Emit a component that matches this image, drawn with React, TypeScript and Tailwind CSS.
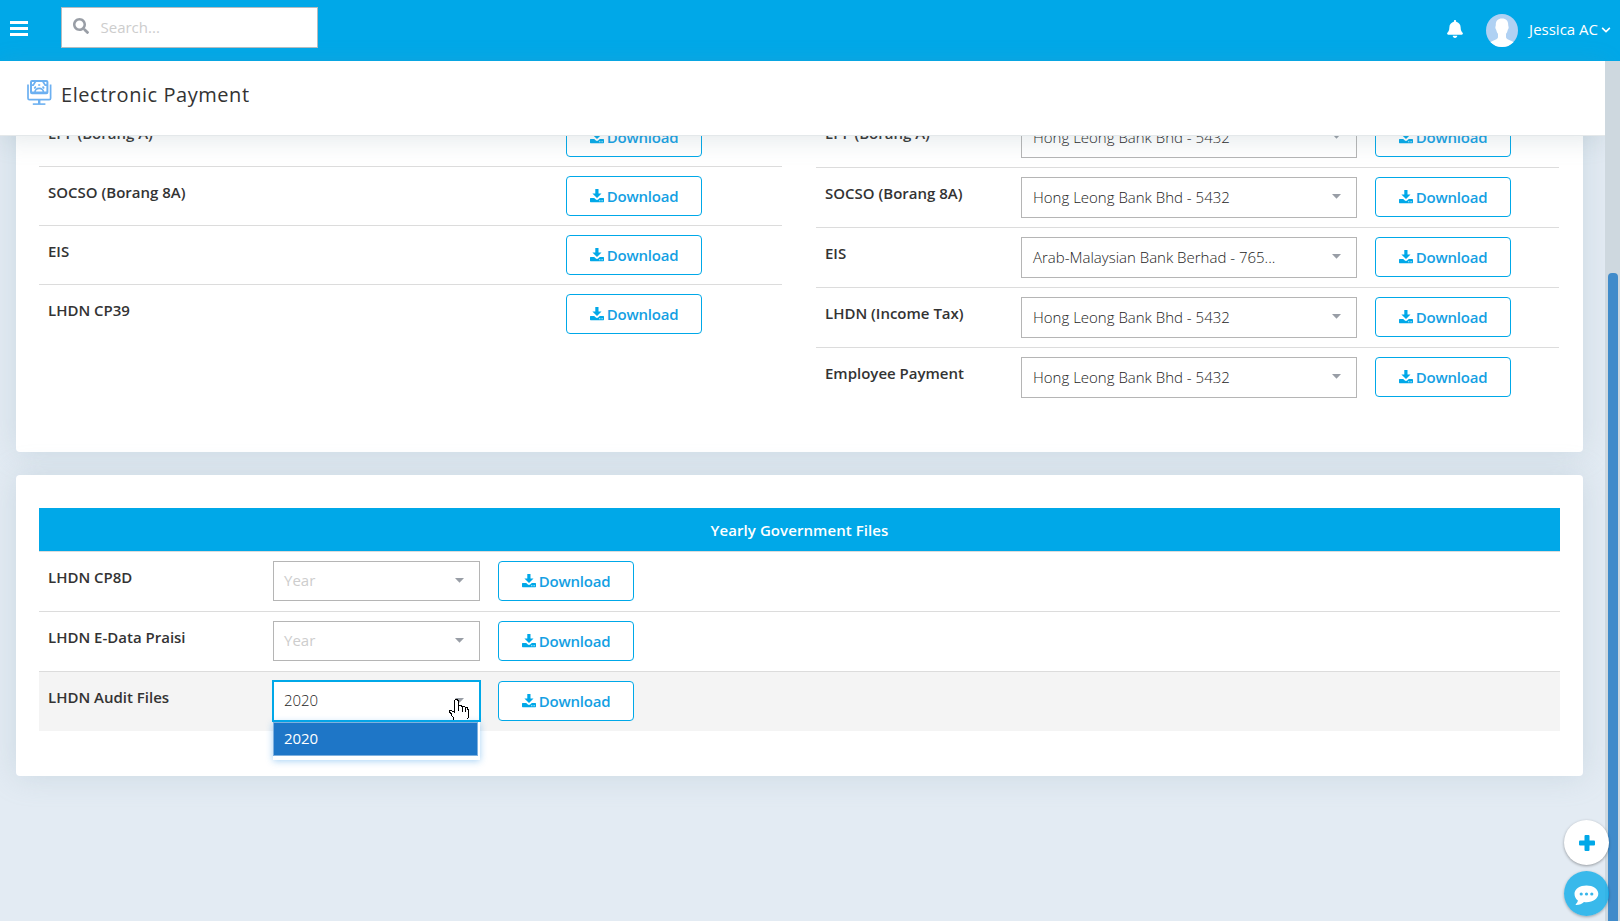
import React from "react";
import { FaBell, FaSearch, FaChevronDown } from "react-icons/fa";

const HONG_LEONG = "Hong Leong Bank Bhd - 5432";

const monthlyFiles = ["EPF (Borang A)", "SOCSO (Borang 8A)", "EIS", "LHDN CP39"];

const bankFiles = [
  { label: "EPF (Borang A)", bank: HONG_LEONG },
  { label: "SOCSO (Borang 8A)", bank: HONG_LEONG },
  { label: "EIS", bank: "Arab-Malaysian Bank Berhad - 765..." },
  { label: "LHDN (Income Tax)", bank: HONG_LEONG },
  { label: "Employee Payment", bank: HONG_LEONG },
];

function DownloadButton() {
  return (
    <button className="flex h-10 w-[136px] shrink-0 items-center justify-center gap-[3px] rounded-[4px] border border-[#00a8e8] bg-white text-[15px] font-[560] tracking-[-0.2px] text-[#149fe3]">
      <svg width="14" height="14" viewBox="0 0 14 14" className="shrink-0" fill="#00a8e8">
        <path d="M5.3 0h3.2v4.6h3L7 9.1 2.4 4.6h2.9z" />
        <path
          fillRule="evenodd"
          d="M.6 9h3.6l1.7 1.6c.6.6 1.6.6 2.2 0L9.800 9h3.6c.3 0 .6.3.6.6v3c0 .3-.3.6-.6.6H.6c-.3 0-.6-.3-.6-.6v-3C0 9.300.3 9 .6 9zM9.300 11.200v1h1v-1zM11.600 11.200v1h1v-1z"
        />
      </svg>
      <span className="pt-px">Download</span>
    </button>
  );
}

function Caret() {
  return (
    <svg width="9" height="5" viewBox="0 0 9 5" className="-mt-0.5 shrink-0" fill="#999ea6">
      <path d="M0 0h9L4.500 4.700z" />
    </svg>
  );
}

function MonitorIcon() {
  return (
    <svg width="25" height="25" viewBox="0 0 25 25" className="shrink-0" fill="none" stroke="#6cb0f1" strokeWidth="1.700">
      <path d="M1 4.500v13.700c0 .9.500 1.400 1.400 1.400h19.800c.9 0 1.400-.5 1.400-1.400V4.500" />
      <rect x="4" y="1" width="16.400" height="12.200" rx="1" strokeWidth="2" />
      <path d="M4 5.200h2.200L8.500 1.500M20.400 5.200h-2.200L15.900 1.500" />
      <path d="M4.500 12.300h15.500" strokeWidth="1.600" />
      <path d="M8 12a4.200 3.600 0 0 1 8.400 0M7.300 8.500l1.500-2M17.100 8.500l-1.500-2M11.200 5h2" />
      <path d="M12.200 20v4" strokeWidth="2.400" />
      <path d="M5.800 24.100h12.600" strokeWidth="1.600" />
    </svg>
  );
}

function Avatar() {
  return (
    <svg width="32" height="33" viewBox="0 0 32 33" className="shrink-0">
      <defs>
        <clipPath id="avatar-clip">
          <ellipse cx="16" cy="16.500" rx="16" ry="16.500" />
        </clipPath>
      </defs>
      <g clipPath="url(#avatar-clip)">
        <rect width="32" height="33" fill="#b0d1f3" />
        <path
          fill="#fff"
          d="M16 4.500c4.300 0 6.300 2.500 6.200 6.500 0 1 .6 1.500.4 3-.2 1.300-.8 1.500-1 2.500-.3 1.600-1 2.500-1.600 3.300v3.400c0 1.500 2.500 2.500 5 3.500l4 2V34H3v-5.300l4-2c2.500-1 5-2 5-3.500v-3.400c-.6-.8-1.300-1.700-1.600-3.300-.2-1-.8-1.200-1-2.500-.2-1.500.4-2 .4-3-.1-4 1.900-6.500 6.200-6.500z"
        />
      </g>
    </svg>
  );
}

function HandCursor() {
  return (
    <svg width="22" height="21" viewBox="0 0 22 21" className="pointer-events-none absolute top-[19px] left-[176px]" shapeRendering="crispEdges">
      <path
        d="M5.500 20.500V18.500L3.500 16.500V14.500L1.500 13.500V11.500H3.500L6.500 13.500V1.500L7.500 .5H8.500L10.500 1.500V6.500H12.500L14.500 7.500H16L17.500 8.500H19L20.500 11.500V17.500L19.500 20.500"
        fill="#fff"
        stroke="#000"
        strokeWidth="1"
      />
      <path d="M10.500 6v6M14.500 7.500V12.500M17.500 8.500V13" stroke="#000" strokeWidth="1" fill="none" />
    </svg>
  );
}

function YearSelect({ open = false }: { open?: boolean }) {
  if (!open) {
    return (
      <div className="flex h-10 w-[207px] items-center justify-between border border-[#b5b5b5] bg-white pr-[15px] pl-2.5 text-[15px] text-[#cdcdcd]">
        <span className="-mt-0.5">Year</span>
        <Caret />
      </div>
    );
  }
  return (
    <div className="relative -m-px">
      <div className="flex h-[42px] w-[209px] items-center justify-between border-2 border-[#00a8e8] bg-white pr-[15px] pl-2.5 text-[15px] font-[350] tracking-[-0.1px] text-[#1c1c1c]">
        <span className="-mt-0.5">2020</span>
        <Caret />
      </div>
      <div className="absolute top-[42px] left-px w-[207px] bg-white pr-0.5 pb-1 shadow-[0_1px_7px_rgba(30,140,230,0.4)]">
        <div className="flex h-[34px] items-center border border-[#7fb0de] bg-[#1e76c7] pb-px pl-2.5 text-[15px] tracking-[-0.1px] text-white">2020</div>
      </div>
      <HandCursor />
    </div>
  );
}

function Label({ children }: { children: React.ReactNode }) {
  return <div className="pt-[14px] pl-[9px] text-[15px] leading-[22px] font-semibold text-[#333]">{children}</div>;
}

function TopBar() {
  return (
    <header className="flex h-[61px] shrink-0 items-center bg-[#00a8e8] text-white">
      <div className="ml-2.5 flex w-[51px] flex-col gap-[3px] pb-1">
        <span className="h-[3px] w-[18px] bg-white" />
        <span className="h-[3px] w-[18px] bg-white" />
        <span className="h-[3px] w-[18px] bg-white" />
      </div>
      <div className="mb-1.5 flex h-[41px] w-[257px] items-center border border-[#b5bcc0] bg-white pl-[11px]">
        <FaSearch className="-mt-[3px] size-4 text-[#999ea6]" />
        <span className="-mt-px ml-[11.5px] text-[15px] text-[#cdcdcd]">Search...</span>
      </div>
      <div className="ml-auto flex items-center pr-[9px]">
        <FaBell className="mr-[23px] mb-[3px] h-[18px] w-4" />
        <Avatar />
        <span className="mb-0.5 ml-[11px] text-[15px]">Jessica AC</span>
        <FaChevronDown className="mb-0.5 ml-[3px] size-2.5" />
      </div>
    </header>
  );
}

function PaymentFiles() {
  return (
    <section className="-mt-[60px] flex h-[376px] items-start justify-between rounded-[4px] bg-white pt-[31px] pr-6 pl-[23px] shadow-[0_0_30px_rgba(150,175,190,0.3)]">
      <div className="w-[743px]">
        {monthlyFiles.map((label) => (
          <div key={label} className="flex h-[59px] justify-between border-t border-[#dcdcdc] pr-20">
            <Label>{label}</Label>
            <div className="pt-[9px]">
              <DownloadButton />
            </div>
          </div>
        ))}
      </div>
      <div className="w-[743px]">
        {bankFiles.map(({ label, bank }) => (
          <div key={label} className="flex h-[60px] border-t border-[#dcdcdc]">
            <div className="w-[205px]">
              <Label>{label}</Label>
            </div>
            <div className="flex gap-[18px] pt-[9px]">
              <div className="flex h-[41px] w-[336px] items-center justify-between border border-[#b5b5b5] bg-white pr-[15px] pl-[11px] text-[15px] font-[330] text-[#1c1c1c]">
                <span className="-mt-px">{bank}</span>
                <Caret />
              </div>
              <DownloadButton />
            </div>
          </div>
        ))}
      </div>
    </section>
  );
}

function YearlyFiles() {
  return (
    <section className="mt-[23px] h-[301px] rounded-[4px] bg-white pt-[33px] pr-[23px] pl-[23px] shadow-[0_0_30px_rgba(150,175,190,0.3)]">
      <h2 className="flex h-[43px] items-center justify-center bg-[#00a8e8] pt-px text-[15px] font-semibold tracking-[0.08px] text-white">Yearly Government Files</h2>
      {["LHDN CP8D", "LHDN E-Data Praisi", "LHDN Audit Files"].map((label, i) => (
        <div key={label} className={i === 2 ? "flex h-[60px] border-t border-[#dcdcdc] bg-[#f4f4f4]" : "flex h-[60px] border-t border-[#dcdcdc]"}>
          <div className="w-[234px]">
            <Label>{label}</Label>
          </div>
          <div className="flex items-start gap-[18px] pt-[9px]">
            <YearSelect open={i === 2} />
            <DownloadButton />
          </div>
        </div>
      ))}
    </section>
  );
}

export default function App() {
  return (
    <div className="relative flex h-[921px] w-[1620px] flex-col overflow-hidden bg-[#e3ebf3] font-['Open_Sans',sans-serif]">
      <TopBar />
      <div className="flex min-h-0 flex-1">
        <div className="flex w-[1605px] flex-col">
          <div className="relative z-10 flex h-[75px] shrink-0 border-b border-[#e4e8ea] bg-white pl-[27px] shadow-[0_4px_26px_rgba(120,145,155,0.2)]">
            <div className="pt-[19px]">
              <MonitorIcon />
            </div>
            <h1 className="ml-[9px] pt-[18px] text-[20px] leading-8 font-medium tracking-[0.55px] text-[#333]">Electronic Payment</h1>
          </div>
          <main className="min-h-0 flex-1 overflow-hidden pr-[22px] pl-4">
            <PaymentFiles />
            <YearlyFiles />
          </main>
        </div>
        <div className="relative z-20 w-[15px] bg-[#ced8df] pt-[212px] pl-[3px]">
          <div className="h-full w-2.5 rounded-t-[4px] bg-[#408bca]" />
        </div>
      </div>
      <div className="absolute right-[11px] bottom-[5px] z-30 flex flex-col gap-1.5">
        <button className="flex size-[45px] items-center justify-center rounded-full bg-white text-[#00a8e8] shadow-[0_1px_3px_rgba(0,0,0,0.35)]">
          <svg width="16" height="16" viewBox="0 0 16 16" fill="currentColor">
            <rect x="5.500" width="5" height="16" rx="1" />
            <rect y="5.500" width="16" height="5" rx="1" />
          </svg>
        </button>
        <button className="flex size-[45px] items-center justify-center rounded-full bg-[#00a8e8]/75 shadow-[0_1px_3px_rgba(0,0,0,0.3)]">
          <svg width="25" height="21" viewBox="0 0 25 21" className="mt-1">
            <path
              fill="#fff"
              d="M12.500.5C19 .5 24.300 4 24.300 8.800s-5.300 8.400-11.800 8.400c-.9 0-1.700 0-2.500-.2-2 2-4.600 3-7.700 3.100-.6 0-.8-.6-.4-1 1-1 1.800-2.200 2-3.600C1.700 14 .5 11.500.5 8.800.5 4 6 .5 12.500.5z"
            />
            <circle cx="7.200" cy="9" r="1.600" fill="#38b6ea" />
            <circle cx="12.500" cy="9" r="1.600" fill="#38b6ea" />
            <circle cx="17.800" cy="9" r="1.600" fill="#38b6ea" />
          </svg>
        </button>
      </div>
    </div>
  );
}
